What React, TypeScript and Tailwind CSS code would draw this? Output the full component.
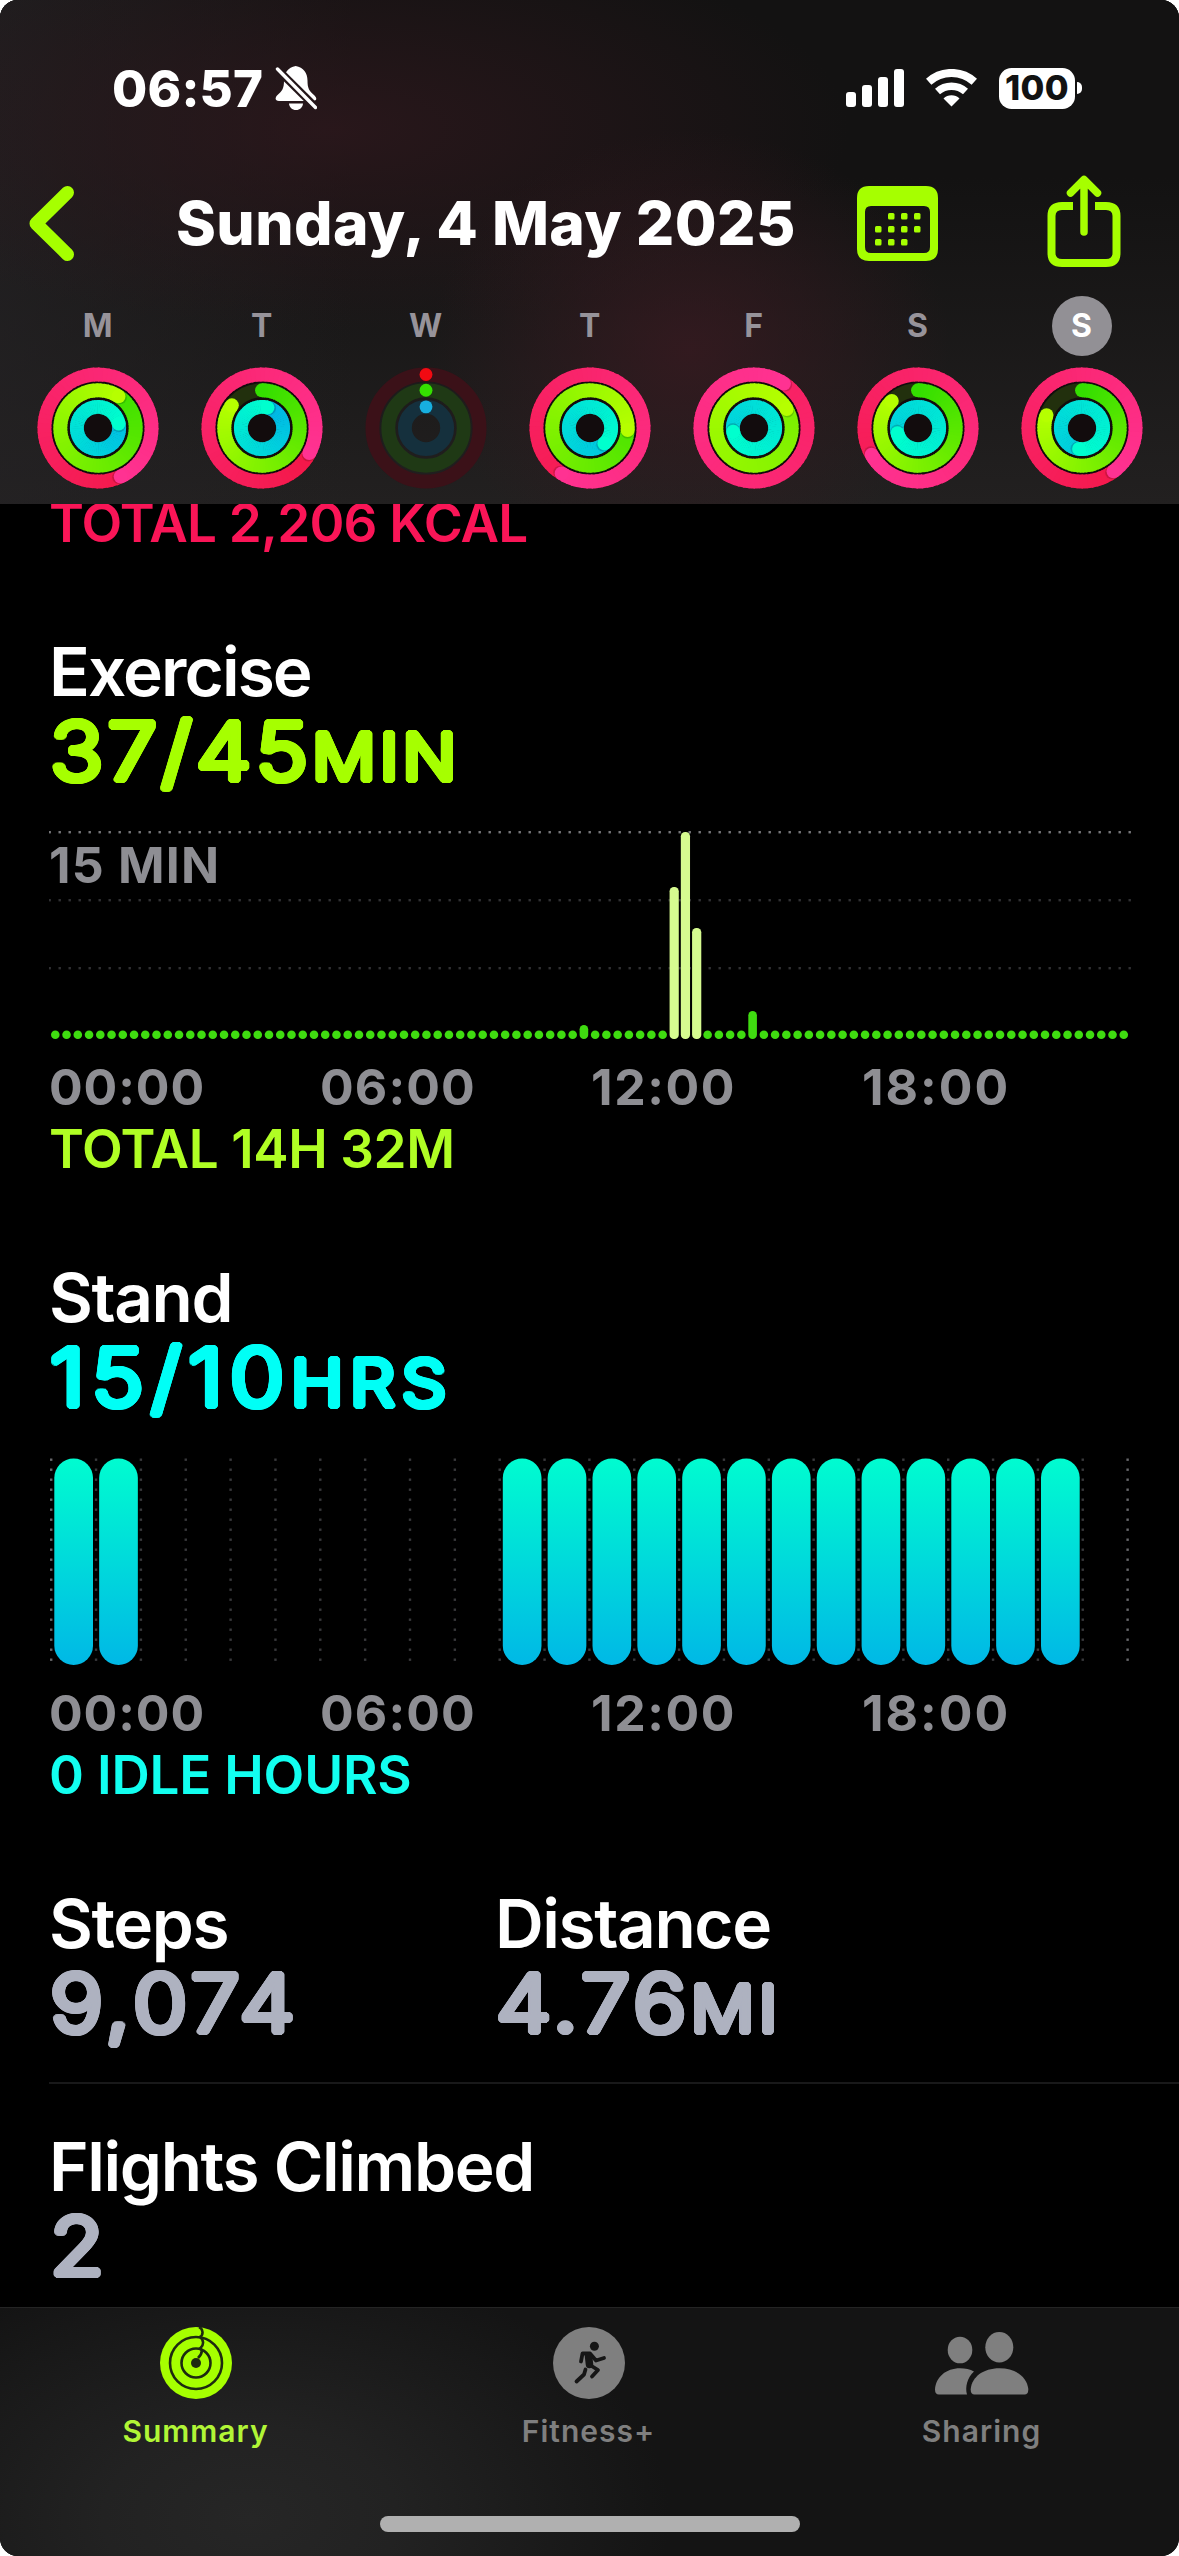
import type { ReactNode } from "react";

type RGB = [number, number, number];

const RED: [RGB, RGB] = [[240, 15, 48], [255, 50, 146]];
const GREEN: [RGB, RGB] = [[52, 222, 0], [182, 255, 0]];
const BLUE: [RGB, RGB] = [[0, 178, 232], [0, 255, 206]];

const point = (r: number, deg: number) => {
  const a = ((deg - 90) * Math.PI) / 180;
  return [r * Math.cos(a), r * Math.sin(a)];
};

const mix = ([a, b]: [RGB, RGB], t: number) =>
  `rgb(${a.map((v, i) => Math.round(v + (b[i] - v) * t)).join(",")})`;

/* One activity ring; `total` is the swept angle, which may exceed a full lap. */
function Ring({ r, total, colors, track }: { r: number; total: number; colors: [RGB, RGB]; track: string }) {
  const start = Math.max(0, total - 360);
  const steps = 72;
  const step = (total - start) / steps;
  const [ex, ey] = point(r, total);
  const [sx, sy] = point(r, start);
  const [hx, hy] = point(r, total + 110 / r);
  return (
    <g fill="none" strokeWidth={14}>
      <circle r={r} stroke={track} />
      {total > 0 && total <= 360 && <circle cx={sx} cy={sy} r={7} fill={mix(colors, 0)} />}
      {total > 0 &&
        Array.from({ length: steps }, (_, i) => {
          const a = start + i * step;
          const [x1, y1] = point(r, a);
          const [x2, y2] = point(r, a + step + (i < steps - 1 ? 1.5 : 0));
          return <path key={i} d={`M${x1} ${y1}A${r} ${r} 0 0 1 ${x2} ${y2}`} stroke={mix(colors, a / total)} />;
        })}
      {total > 360 && <circle cx={hx} cy={hy} r={6.8} fill="rgba(0,0,0,0.16)" />}
      {total > 0 && <circle cx={ex} cy={ey} r={7} fill={mix(colors, 1)} />}
    </g>
  );
}

function ActivityRings({ move, exercise, stand, empty }: { move: number; exercise: number; stand: number; empty?: boolean }) {
  return (
    <svg viewBox="-61.500 -61.500 123 123" className="size-[122px]">
      {!empty && <circle r={54} fill="#120c0d" />}
      <Ring r={54} total={move} colors={RED} track="#3b1118" />
      <Ring r={38} total={exercise} colors={GREEN} track={empty ? "#1f3915" : "#22300d"} />
      <Ring r={21.3} total={stand} colors={BLUE} track="#15303d" />
      {empty && (
        <>
          <circle cy={-54} r={6.5} fill="#f20a12" />
          <circle cy={-38} r={6.5} fill="#35e000" />
          <circle cy={-21.3} r={6.5} fill="#17afe0" />
        </>
      )}
    </svg>
  );
}

const week = [
  { day: "M", move: 515, exercise: 393, stand: 438 },
  { day: "T", move: 478, exercise: 307, stand: 375 },
  { day: "W", move: 0, exercise: 0, stand: 0, empty: true },
  { day: "T", move: 572, exercise: 453, stand: 497 },
  { day: "F", move: 754, exercise: 780, stand: 620 },
  { day: "S", move: 600, exercise: 316, stand: 616 },
  { day: "S", move: 504, exercise: 290, stand: 548, selected: true },
];

function StatusBar() {
  return (
    <div className="flex h-11 items-center justify-between pr-[97px] pl-[112px] text-white">
      <div className="flex items-center">
        <span className="text-[51px] leading-none font-[780] tracking-[0.2px]">06:57</span>
        <svg viewBox="0 0 42 44" className="ml-[12px] h-11 w-[42px]">
          <mask id="bell-cut">
            <rect width="42" height="44" fill="#fff" />
            <path d="M0 1 43 43.500" stroke="#000" strokeWidth="8" />
          </mask>
          <g mask="url(#bell-cut)" fill="#fff">
            <path d="M20.700 0C13 1.500 9 7 9 14.500 9 22 7.500 25 2 29.500-.5 32.500.5 35 4 35H38c3.500 0 4.500-2.500 1.500-5.500C34 25 32.500 22 32.500 14.500 32.500 7 28.500 1.500 20.700 0Z" />
            <path d="M14 37.500h14c-.5 4-3 6.500-7 6.500s-6.500-2.500-7-6.500Z" />
          </g>
          <path d="M2.500 3 40.500 41.500" stroke="#fff" strokeWidth="3.400" strokeLinecap="round" />
        </svg>
      </div>
      <div className="flex items-center">
        <div className="flex h-[38px] items-end gap-[5.500px]">
          <i className="h-[15px] w-[10.500px] rounded-[3px] bg-white" />
          <i className="h-[22px] w-[10.500px] rounded-[3px] bg-white" />
          <i className="h-[30px] w-[10.500px] rounded-[3px] bg-white" />
          <i className="h-[38px] w-[10.500px] rounded-[3px] bg-white" />
        </div>
        <svg viewBox="-25.500 -38 51 38" className="ml-[22px] h-[38px] w-[51px]" fill="none" stroke="#fff">
          <path d="M-22.800-25.300A34 34 0 0 1 22.800-25.300" strokeWidth="8" />
          <path d="M-14-15.500A21 21 0 0 1 14-15.500" strokeWidth="7.500" />
          <path d="M0-.5-8-8.500A11.500 11.500 0 0 1 8-8.500Z" fill="#fff" stroke="none" />
        </svg>
        <div className="ml-[22px] flex h-[41px] w-[76px] items-center justify-center rounded-[12.500px] bg-white text-[34.500px] leading-none font-[780] tracking-[0.3px] text-[#121212]">
          100
        </div>
        <i className="ml-[2px] h-3 w-[5px] rounded-r-full bg-white" />
      </div>
    </div>
  );
}

function NavBar() {
  return (
    <div className="mt-[67px] flex h-[92px] items-center pl-[29px]">
      <svg viewBox="0 0 45 75" className="h-[75px] w-[45px]" fill="none" stroke="#a6ff00" strokeWidth="13" strokeLinecap="round" strokeLinejoin="round">
        <path d="M38.500 6.500 7 37.500 38.500 68.500" />
      </svg>
      <h1 className="ml-[102px] w-[681px] text-[60.500px] leading-none font-[780] tracking-[0.400px] whitespace-nowrap text-white">Sunday, 4 May 2025</h1>
      <svg viewBox="0 0 81 75" className="h-[75px] w-[81px]">
        <path fill="#a6ff00" fillRule="evenodd" d="M12 0H69Q81 0 81 12V63Q81 75 69 75H12Q0 75 0 63V12Q0 0 12 0ZM14 20Q8 20 8 26V61Q8 67 14 67H67Q73 67 73 61V26Q73 20 67 20Z" />
        <g fill="#a6ff00">
          {[[31, 27], [44, 27], [57, 27], [18, 40], [31, 40], [44, 40], [57, 40], [18, 53], [31, 53], [44, 53]].map(([x, y]) => (
            <rect key={`${x}-${y}`} x={x} y={y} width="6.500" height="6.500" rx="1.500" />
          ))}
        </g>
      </svg>
      <svg viewBox="0 0 74 93" className="mb-1 ml-[109px] h-[93px] w-[74px]" fill="none" stroke="#a6ff00" strokeLinecap="round" strokeLinejoin="round">
        <path d="M26 31H15Q4.500 31 4.500 41V78Q4.500 88 15 88H59Q69.500 88 69.500 78V41Q69.500 31 59 31H48" strokeWidth="8" strokeLinecap="butt" />
        <path d="M37 6V57M23.500 18 37 4.500 50.500 18" strokeWidth="7.500" />
      </svg>
    </div>
  );
}

function Week() {
  return (
    <div className="mt-[27px] ml-[15.600px] grid w-[1148px] grid-cols-7">
      {week.map((d, i) => (
        <div key={i} className="flex flex-col items-center">
          <span
            className={
              d.selected
                ? "flex size-[60px] items-center justify-center rounded-full bg-[#929095] text-[32px] font-bold text-white"
                : "flex size-[60px] items-center justify-center text-[32px] font-bold text-[#97939a]"
            }
          >
            {d.day}
          </span>
          <div className="mt-[11px]">
            <ActivityRings move={d.move} exercise={d.exercise} stand={d.stand} empty={d.empty} />
          </div>
        </div>
      ))}
    </div>
  );
}

function Heading({ children, tracking = "tracking-[-1.400px]" }: { children: ReactNode; tracking?: string }) {
  return (
    <div className={tracking}>
      <h2 className="text-[67.500px] leading-[68px] font-[570] whitespace-nowrap text-white">{children}</h2>
    </div>
  );
}

/* Thin numerals thickened evenly in every direction, which rounds their stroke ends. */
function Value({ value, unit, color, tracking = "tracking-[3.900px]" }: { value: string; unit?: string; color: string; tracking?: string }) {
  return (
    <div className={color}>
      <div className={tracking}>
        <div className="mt-1.5 ml-px h-[78px] origin-left scale-x-[1.1] text-[80px] leading-[78px] font-[270] whitespace-nowrap [text-shadow:3.200px_0_0,3px_1.200px_0,2.300px_2.300px_0,1.200px_3px_0,0_3.200px_0,-1.200px_3px_0,-2.300px_2.300px_0,-3px_1.200px_0,-3.200px_0_0,-3px_-1.200px_0,-2.300px_-2.300px_0,-1.200px_-3px_0,0_-3.200px_0,1.200px_-3px_0,2.300px_-2.300px_0,3px_-1.200px_0,1.500px_0_0,-1.500px_0_0,0_1.500px_0,0_-1.500px_0]">
          {value}
          {unit && <span className="text-[64px] leading-none">{unit}</span>}
        </div>
      </div>
    </div>
  );
}

function Hours() {
  return (
    <div className="grid h-[50px] w-[1084px] grid-cols-4 text-[50px] leading-[50px] font-[750] text-[#8e8e93]">
      <span className="tracking-[0.9px]">00:00</span>
      <span className="tracking-[1.100px]">06:00</span>
      <span className="tracking-[1.600px]">12:00</span>
      <span className="tracking-[2px]">18:00</span>
    </div>
  );
}

function Total({ color, children }: { color: string; children: ReactNode }) {
  return (
    <div className={color}>
      <p className="text-[53px] leading-[53px] font-[560] whitespace-nowrap">{children}</p>
    </div>
  );
}

const exerciseHeights: Record<number, number> = { 47: 14, 55: 152, 56: 207, 57: 111, 62: 28 };

function ExerciseChart() {
  return (
    <div className="relative mt-10 h-[210px] w-[1084px]">
      <svg viewBox="49 830 1084 210" className="h-[210px] w-[1084px]">
        {[832, 900, 968].map((y, row) => (
          <g key={y} fill={row === 0 ? "#77777a" : "#303033"}>
            {Array.from({ length: 109 }, (_, i) => (
              <rect key={i} x={48.5 + i * 10} y={y - 1} width="2.400" height="2.400" />
            ))}
          </g>
        ))}
        {Array.from({ length: 96 }, (_, i) => {
          const h = exerciseHeights[i] ?? 8.5;
          return <rect key={i} x={51 + i * 11.247} y={1039 - h} width={h > 100 ? 9.2 : 8.6} height={h} rx="4.300" fill={h > 100 ? "#d6fb90" : "#3fdc10"} />;
        })}
      </svg>
      <span className="absolute top-[10px] left-0 text-[50px] leading-[50px] font-[750] tracking-[1.200px] text-[#8e8e93]">15 MIN</span>
    </div>
  );
}

const standing = [0, 1, 10, 11, 12, 13, 14, 15, 16, 17, 18, 19, 20, 21, 22];

function StandChart() {
  return (
    <svg viewBox="49 1456 1084 210" className="mt-10 h-[210px] w-[1084px]">
      <defs>
        <linearGradient id="stand-fill" x1="0" y1="0" x2="0" y2="1">
          <stop offset="0" stopColor="#00fcd0" />
          <stop offset="1" stopColor="#00b8e6" />
        </linearGradient>
      </defs>
      {Array.from({ length: 25 }, (_, col) => (
        <g key={col} fill={col === 0 || col === 24 ? "#66666a" : "#38383b"}>
          {Array.from({ length: 21 }, (_, i) => (
            <rect key={i} x={50 + col * 44.85} y={1458.5 + i * 10} width="2.400" height="2.400" />
          ))}
        </g>
      ))}
      {standing.map((h) => (
        <rect key={h} x={54.3 + h * 44.85} y="1458.500" width="38.700" height="206.500" rx="19.350" fill="url(#stand-fill)" />
      ))}
    </svg>
  );
}

function SummaryIcon() {
  return (
    <svg viewBox="-36 -36 72 72" className="size-[72px]">
      <circle r="36" fill="#a6ff00" />
      <g fill="none" stroke="#1d2b10" strokeWidth="2.600">
        <circle r="26" />
        <circle r="14.500" />
        <path d="M3-36C7.500-34 7.500-28 4-26 8-23 8-18 4.500-15 7-12 5-8 2-5" />
      </g>
      <circle r="5" fill="#1d2b10" />
    </svg>
  );
}

function RunnerIcon() {
  return (
    <svg viewBox="-36 -36 72 72" className="size-[72px]">
      <circle r="36" fill="#7f7f7f" />
      <circle cx="5.400" cy="-16.700" r="4.500" fill="#161616" />
      <g fill="none" stroke="#161616" strokeWidth="3.800" strokeLinecap="round" strokeLinejoin="round">
        <path d="M-8-1.500-6.500-9.500H1L7-2.500 15-5" />
        <path d="M-.5-7 .5 1.500" strokeWidth="7.500" />
        <path d="M1 2 9 7 3 13.500M-3.500 6.500-5 11.500-12.500 18.500" />
      </g>
    </svg>
  );
}

function SharingIcon() {
  return (
    <svg viewBox="934 2327 96 72" className="h-[72px] w-24" fill="#7f7f7f">
      <ellipse cx="960" cy="2350" rx="12.300" ry="13.300" />
      <ellipse cx="999.300" cy="2347.300" rx="14" ry="15.300" />
      <path d="M939 2394.500Q935 2394.500 935 2389.500C936 2377 946 2368.300 960 2368.300Q968 2368.300 974 2371.500C967 2378 965 2387 967 2394.500Z" />
      <path d="M974.500 2394.500Q970.500 2394.500 970.700 2389C972 2377 983 2368.300 999.500 2368.300S1027 2377 1028.300 2389Q1028.500 2394.500 1024.500 2394.500Z" />
    </svg>
  );
}

function TabBar() {
  return (
    <nav className="h-[249px] shrink-0 border-t border-[#242424] bg-[#141414] bg-[radial-gradient(ellipse_420px_260px_at_250px_210px,#262626_0%,#222222_35%,transparent_100%)] pt-[19px]">
      <div className="-ml-px grid w-[1179px] grid-cols-3 text-[30px] leading-9 font-semibold tracking-[1px] text-[#7f7f7f]">
        <div className="flex flex-col items-center gap-[14px] text-[#b1f536]">
          <SummaryIcon />
          <span>Summary</span>
        </div>
        <div className="flex flex-col items-center gap-[14px]">
          <RunnerIcon />
          <span>Fitness+</span>
        </div>
        <div className="flex flex-col items-center gap-[14px]">
          <SharingIcon />
          <span>Sharing</span>
        </div>
      </div>
      <div className="mx-auto mt-[67px] h-4 w-[420px] rounded-full bg-[#b0b0b0]" />
    </nav>
  );
}

export default function App() {
  return (
    <div className="h-[2556px] w-[1179px] bg-white">
      <div className="flex h-[2556px] flex-col overflow-hidden rounded-[18px] bg-black font-[Inter,sans-serif]">
        <header className="relative z-10 h-[504px] shrink-0 bg-[#141313] bg-[radial-gradient(ellipse_260px_220px_at_690px_350px,rgba(58,26,33,0.75),transparent),radial-gradient(ellipse_520px_200px_at_330px_130px,rgba(46,24,29,0.8),transparent),linear-gradient(to_right,rgba(36,34,36,0.7),transparent_30%),linear-gradient(#131212_35%,#222020)] pt-[66px]">
          <StatusBar />
          <NavBar />
          <Week />
        </header>

        <main className="-mt-[7px] flex-1 pl-[49px]">
          <div className="tracking-[-0.800px]">
            <Total color="text-[#fa1557]">TOTAL 2,206 KCAL</Total>
          </div>

          <section className="mt-[88px]">
            <Heading tracking="tracking-[-1.900px]">Exercise</Heading>
            <Value value="37/45" unit="MIN" color="text-[#a6ff00]" />
            <ExerciseChart />
            <div className="mt-[22px]">
              <Hours />
            </div>
            <div className="mt-[11px] tracking-[-0.400px]">
              <Total color="text-[#b0fe24]">TOTAL 14H 32M</Total>
            </div>
          </section>

          <section className="mt-[88px]">
            <Heading>Stand</Heading>
            <Value value="15/10" unit="HRS" color="text-[#00fff6]" tracking="tracking-[6.300px]" />
            <StandChart />
            <div className="mt-[22px]">
              <Hours />
            </div>
            <div className="mt-[11px] tracking-[-0.200px]">
              <Total color="text-[#12fff0]">0 IDLE HOURS</Total>
            </div>
          </section>

          <section className="mt-[88px] grid grid-cols-[446px_1fr] border-b-2 border-[#19191a] pb-10">
            <div>
              <Heading>Steps</Heading>
              <Value value="9,074" color="text-[#aeb2c0]" tracking="tracking-[4.400px]" />
            </div>
            <div>
              <Heading>Distance</Heading>
              <Value value="4.76" unit="MI" color="text-[#aeb2c0]" tracking="tracking-[4.100px]" />
            </div>
          </section>

          <section className="mt-[49px]">
            <Heading>Flights Climbed</Heading>
            <Value value="2" color="text-[#aeb2c0]" />
          </section>
        </main>

        <TabBar />
      </div>
    </div>
  );
}
